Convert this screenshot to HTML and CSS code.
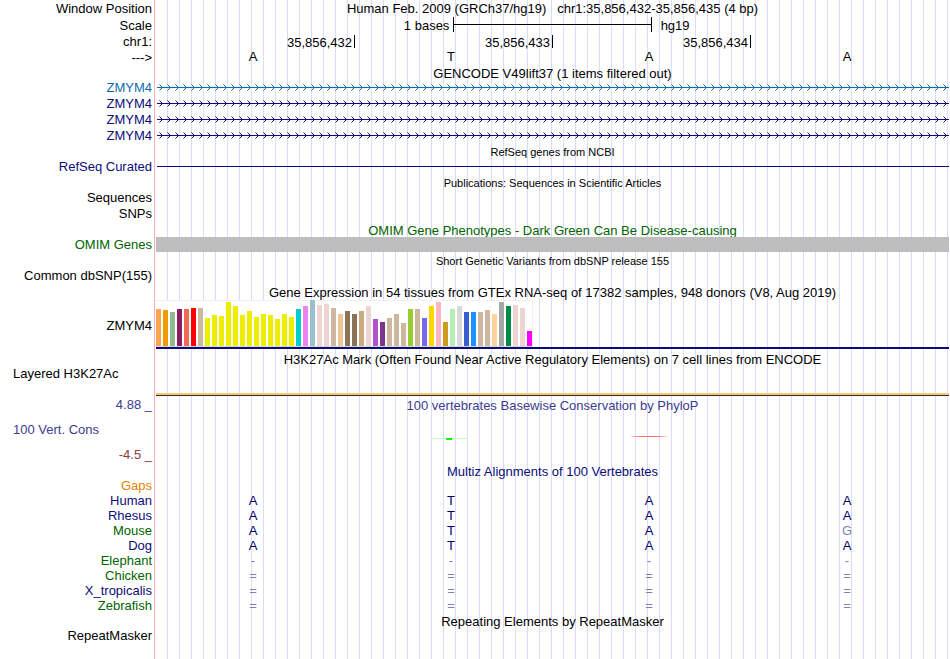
FILE: index.html
```
<!DOCTYPE html>
<html lang="en">
<head>
  <meta charset="UTF-8">
  <meta name="viewport" content="width=device-width, initial-scale=1">
  <title>Human chr1:35,856,432-35,856,435 Genome Browser</title>
  <link rel="stylesheet" href="styles.css">
</head>
<body>

  <main class="browser">

    <!-- ruler -->
    <div class="row h17">
      <div class="label">Window Position</div>
      <h1 class="data title">Human Feb. 2009 (GRCh37/hg19) &nbsp; chr1:35,856,432-35,856,435 (4 bp)</h1>
    </div>
    <div class="row h17">
      <div class="label">Scale</div>
      <div class="data scale">
        <span class="scale-length">1 bases</span>
        <span class="scale-bar"></span>
        <span class="scale-db">hg19</span>
      </div>
    </div>
    <div class="row h16">
      <div class="label">chr1:</div>
      <div class="data positions">
        <span>35,856,432</span>
        <span>35,856,433</span>
        <span>35,856,434</span>
      </div>
    </div>
    <div class="row h15">
      <div class="label">---&gt;</div>
      <div class="data bases ruler-bases"><span>A</span><span>T</span><span>A</span><span>A</span></div>
    </div>

    <!-- genes -->
    <div class="row h15">
      <h2 class="data title track-title">GENCODE V49lift37 (1 items filtered out)</h2>
    </div>
    <div class="row h16 blue">
      <div class="label">ZMYM4</div>
      <div class="data"><svg class="gene"></svg></div>
    </div>
    <div class="row h16 navy">
      <div class="label">ZMYM4</div>
      <div class="data"><svg class="gene"></svg></div>
    </div>
    <div class="row h16 navy">
      <div class="label">ZMYM4</div>
      <div class="data"><svg class="gene"></svg></div>
    </div>
    <div class="row h16 navy">
      <div class="label">ZMYM4</div>
      <div class="data"><svg class="gene"></svg></div>
    </div>

    <div class="row h16">
      <h2 class="data title small">RefSeq genes from NCBI</h2>
    </div>
    <div class="row h14 navy">
      <div class="label">RefSeq Curated</div>
      <div class="data"><div class="intron"></div></div>
    </div>

    <!-- publications -->
    <div class="row h16">
      <h2 class="data title small track-title">Publications: Sequences in Scientific Articles</h2>
    </div>
    <div class="row h16"><div class="label">Sequences</div></div>
    <div class="row h16"><div class="label">SNPs</div></div>

    <!-- variation -->
    <div class="row h15 green">
      <h2 class="data title track-title">OMIM Gene Phenotypes - Dark Green Can Be Disease-causing</h2>
    </div>
    <div class="row h15 green">
      <div class="label">OMIM Genes</div>
      <div class="data omim"></div>
    </div>
    <div class="row h16">
      <h2 class="data title small track-title">Short Genetic Variants from dbSNP release 155</h2>
    </div>
    <div class="row h16"><div class="label">Common dbSNP(155)</div></div>

    <!-- expression -->
    <div class="row h16">
      <h2 class="data title track-title">Gene Expression in 54 tissues from GTEx RNA-seq of 17382 samples, 948 donors (V8, Aug 2019)</h2>
    </div>
    <div class="row h52">
      <div class="label">ZMYM4</div>
      <div class="data gtex">
        <div class="gtex-bars" id="gtexBars"></div>
      </div>
    </div>

    <!-- regulation -->
    <div class="row h15">
      <h2 class="data title">H3K27Ac Mark (Often Found Near Active Regulatory Elements) on 7 cell lines from ENCODE</h2>
    </div>
    <div class="row h30">
      <div class="label wiggle-name">Layered H3K27Ac</div>
      <div class="data h3k27"></div>
    </div>

    <!-- conservation -->
    <div class="row h16 indigo">
      <div class="label">4.88 _</div>
      <h2 class="data title track-title">100 vertebrates Basewise Conservation by PhyloP</h2>
    </div>
    <div class="row h34 indigo">
      <div class="label wiggle-name">100 Vert. Cons</div>
      <div class="data">
        <svg class="phylop">
          <defs>
            <linearGradient id="fadeRed">
              <stop offset="0" stop-color="#ff5050" stop-opacity="0"/>
              <stop offset="0.25" stop-color="#ff5050" stop-opacity="0.8"/>
              <stop offset="0.75" stop-color="#ff5050" stop-opacity="0.8"/>
              <stop offset="1" stop-color="#ff5050" stop-opacity="0"/>
            </linearGradient>
          </defs>
          <rect x="275" y="25" width="37" height="1" fill="#c8fac8"/>
          <rect x="290" y="25" width="6" height="2" fill="#00ff00"/>
          <rect x="473" y="23" width="40" height="1" fill="url(#fadeRed)"/>
        </svg>
      </div>
    </div>
    <div class="row h16 maroon"><div class="label">-4.5 _</div></div>

    <div class="row h16 navy">
      <h2 class="data title track-title">Multiz Alignments of 100 Vertebrates</h2>
    </div>
    <div class="row h14 orange"><div class="label">Gaps</div></div>
    <div class="row h15 navy">
      <div class="label">Human</div>
      <div class="data bases"><span>A</span><span>T</span><span>A</span><span>A</span></div>
    </div>
    <div class="row h15 navy">
      <div class="label">Rhesus</div>
      <div class="data bases"><span>A</span><span>T</span><span>A</span><span>A</span></div>
    </div>
    <div class="row h15 green">
      <div class="label">Mouse</div>
      <div class="data bases"><span>A</span><span>T</span><span>A</span><span class="faded">G</span></div>
    </div>
    <div class="row h15 navy">
      <div class="label">Dog</div>
      <div class="data bases"><span>A</span><span>T</span><span>A</span><span>A</span></div>
    </div>
    <div class="row h15 green">
      <div class="label">Elephant</div>
      <div class="data bases faded"><span>-</span><span>-</span><span>-</span><span>-</span></div>
    </div>
    <div class="row h15 green">
      <div class="label">Chicken</div>
      <div class="data bases faded"><span>=</span><span>=</span><span>=</span><span>=</span></div>
    </div>
    <div class="row h15 navy">
      <div class="label">X_tropicalis</div>
      <div class="data bases faded"><span>=</span><span>=</span><span>=</span><span>=</span></div>
    </div>
    <div class="row h15 green">
      <div class="label">Zebrafish</div>
      <div class="data bases faded"><span>=</span><span>=</span><span>=</span><span>=</span></div>
    </div>

    <!-- repeats -->
    <div class="row h16">
      <h2 class="data title track-title">Repeating Elements by RepeatMasker</h2>
    </div>
    <div class="row h14"><div class="label">RepeatMasker</div></div>

  </main>

<script>
  // one [color, height] pair per GTEx tissue
  const tissues = [
    ["#ffa54f", 37], ["#ee9a00", 36], ["#8fbc8f", 34], ["#8b1c62", 37], ["#ee6a50", 37], ["#ff0000", 38],
    ["#cdb79e", 38], ["#eeee00", 28], ["#eeee00", 31], ["#eeee00", 30], ["#eeee00", 44], ["#eeee00", 40],
    ["#eeee00", 31], ["#eeee00", 35], ["#eeee00", 29], ["#eeee00", 32], ["#eeee00", 31], ["#eeee00", 27],
    ["#eeee00", 32], ["#eeee00", 29], ["#00cdcd", 37], ["#ee82ee", 40], ["#9ac0cd", 46], ["#eed5d2", 41],
    ["#eed5d2", 42], ["#cdb79e", 38], ["#eec591", 32], ["#8b7355", 35], ["#8b7355", 32], ["#cdaa7d", 35],
    ["#eed5d2", 40], ["#b452cd", 27], ["#7a378b", 24], ["#cdb79e", 28], ["#cdb79e", 32], ["#cdb79e", 23],
    ["#9acd32", 37], ["#cdb79e", 37], ["#7a67ee", 28], ["#ffd700", 40], ["#ffb6c1", 44], ["#cd9b1d", 24],
    ["#b4eeb4", 37], ["#d9d9d9", 40], ["#3a5fcd", 34], ["#1e90ff", 34], ["#cdb79e", 34], ["#cdb79e", 36],
    ["#ffd39b", 32], ["#a6a6a6", 44], ["#008b45", 40], ["#eed5d2", 41], ["#eed5d2", 38], ["#ff00ff", 15]
  ];

  const bars = document.getElementById("gtexBars");
  tissues.forEach(([color, height]) => {
    const bar = document.createElement("span");
    bar.style.height = height + "px";
    bar.style.backgroundColor = color;
    bars.appendChild(bar);
  });

  // intron line with strand arrows every 8px
  document.querySelectorAll(".gene").forEach((svg, i) => {
    svg.innerHTML = `
      <defs>
        <pattern id="arrows${i}" x="1" width="8" height="16" patternUnits="userSpaceOnUse">
          <path d="M2.5 4.5 L5.5 7.5 L2.5 10.5" fill="none" stroke="currentColor" stroke-width="1"/>
        </pattern>
      </defs>
      <rect x="1" width="100%" height="16" fill="url(#arrows${i})"/>
      <rect x="1" y="7" width="100%" height="1" fill="currentColor"/>`;
  });
</script>

</body>
</html>
```
FILE: styles.css
```
body {
  margin: 0 1px 0 0;
  background: white;
  color: black;
  font-family: "Liberation Sans", Arial, Helvetica, sans-serif;
  font-size: 13px;
}

/* vertical guide lines every 12px, red line between labels and tracks */
.browser {
  min-height: 100vh;
  background:
    linear-gradient(#ffb4b4, #ffb4b4) 154px 0 / 1px 100% no-repeat,
    repeating-linear-gradient(to right, transparent 0 11px, #dcdcf8 11px 12px) 156px 0 no-repeat;
}

.row {
  display: grid;
  grid-template-columns: 152px minmax(0, 1fr);
  column-gap: 4px;
  white-space: nowrap;
}

.h14 { height: 14px; line-height: 14px; }
.h15 { height: 15px; line-height: 15px; }
.h16 { height: 16px; line-height: 16px; }
.h17 { height: 17px; line-height: 17px; }
.h30 { height: 30px; line-height: 14px; }
.h34 { height: 34px; line-height: 34px; }
.h52 { height: 52px; line-height: 52px; }

.label {
  grid-column: 1;
  text-align: right;
}

.wiggle-name {
  text-align: left;
  padding-left: 13px;
}

.data {
  grid-column: 2;
}

.title {
  margin: 0;
  font-size: 13px;
  font-weight: normal;
  text-align: center;
}

.track-title {
  padding-top: 1px;
}

.small {
  font-size: 11px;
}

.blue { color: #0c6cb0; }
.navy { color: #0c0c78; }
.green { color: #006400; }
.indigo { color: #3c3c8c; }
.maroon { color: #8c3c3c; }
.orange { color: #e68200; }

/* ruler */
.scale {
  display: grid;
  grid-template-columns: 3fr 2fr 3fr;
}

.scale-length {
  text-align: right;
  padding-right: 4px;
}

.scale-bar {
  height: 15px;
  border: solid black;
  border-width: 0 1px;
  background: linear-gradient(black, black) 0 7px / 100% 1px no-repeat;
}

.scale-db {
  padding-left: 9px;
}

.positions,
.bases {
  display: grid;
  grid-template-columns: repeat(4, 1fr);
  padding-right: 1px;
}

.positions span {
  height: 13px;
  line-height: 15px;
  margin: 1px -1px 0 0;
  padding-right: 2px;
  border-right: 1px solid black;
  text-align: right;
}

.bases {
  color: #00006b;
  text-align: center;
}

.bases span {
  padding-right: 4px;
}

.ruler-bases {
  color: black;
  line-height: 13px;
}

.faded {
  color: #8080b8;
}

/* tracks */
.gene,
.phylop {
  display: block;
  width: 100%;
  height: 100%;
}

.intron {
  height: 1px;
  margin: 6px 0 0 1px;
  background: #0c0c78;
}

.omim {
  background: #bebebe;
}

.gtex {
  height: 47px;
  border-bottom: 2px solid #0c0c78;
}

.gtex-bars {
  display: inline-flex;
  align-items: flex-end;
  gap: 2px;
  height: 46px;
  padding-right: 1px;
  background: white;
  box-shadow: inset 0 1px #f0f0f0, inset -1px 0 #f0f0f0, 0 1px #d8d8d8;
  vertical-align: top;
}

.gtex-bars span {
  width: 5px;
}

.h3k27 {
  height: 2px;
  margin-top: 26px;
  background: #ffc86e;
  border-bottom: 1px solid #32283c;
}
```
